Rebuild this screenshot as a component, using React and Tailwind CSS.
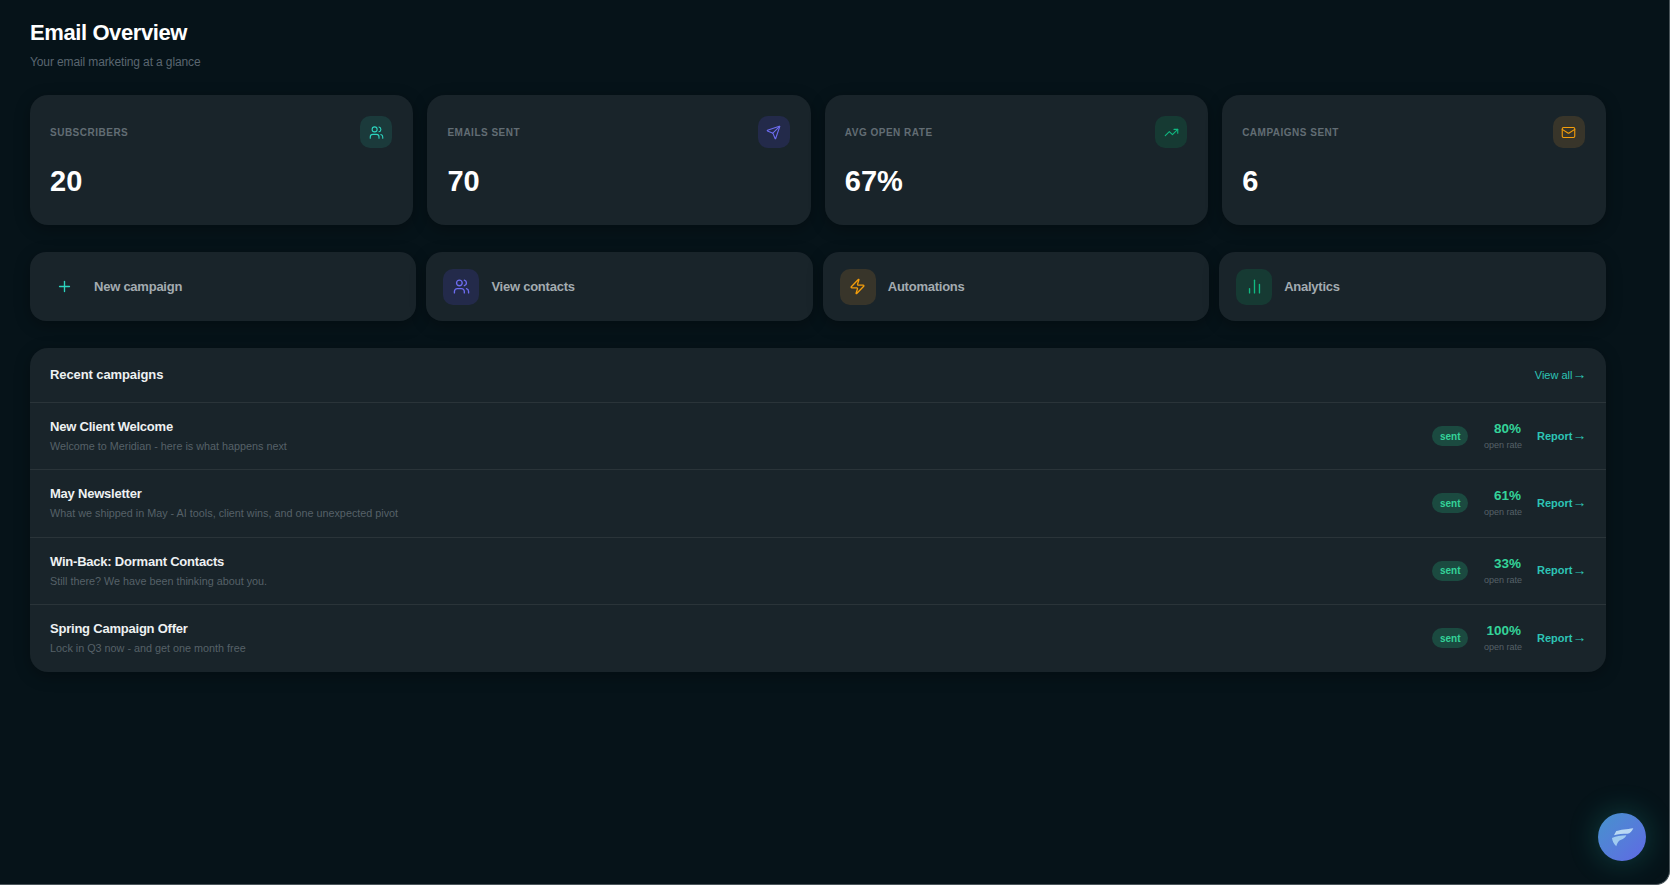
import React from 'react';
import { Users, Send, TrendingUp, Mail, Plus, Zap, ChartNoAxesColumn } from 'lucide-react';

const stats = [
  { label: 'SUBSCRIBERS', value: '20', Icon: Users, box: 'bg-[#1b3a3b]', color: 'text-[#2dd4bf]' },
  { label: 'EMAILS SENT', value: '70', Icon: Send, box: 'bg-[#232a4a]', color: 'text-[#6d6cf0]' },
  { label: 'AVG OPEN RATE', value: '67%', Icon: TrendingUp, box: 'bg-[#163a33]', color: 'text-[#10b981]' },
  { label: 'CAMPAIGNS SENT', value: '6', Icon: Mail, box: 'bg-[#38352a]', color: 'text-[#f59e0b]' },
];

const actions = [
  { label: 'New campaign', Icon: Plus, box: 'w-[35px]', color: 'text-[#2dd4bf]' },
  { label: 'View contacts', Icon: Users, box: 'w-9 bg-[#232a4a]', color: 'text-[#6d6cf0]' },
  { label: 'Automations', Icon: Zap, box: 'w-9 bg-[#38352a]', color: 'text-[#f59e0b]' },
  { label: 'Analytics', Icon: ChartNoAxesColumn, box: 'w-9 bg-[#163a33]', color: 'text-[#10b981]' },
];

const campaigns = [
  { name: 'New Client Welcome', sub: 'Welcome to Meridian - here is what happens next', rate: '80%' },
  { name: 'May Newsletter', sub: 'What we shipped in May - AI tools, client wins, and one unexpected pivot', rate: '61%' },
  { name: 'Win-Back: Dormant Contacts', sub: 'Still there? We have been thinking about you.', rate: '33%' },
  { name: 'Spring Campaign Offer', sub: 'Lock in Q3 now - and get one month free', rate: '100%' },
];

export default function App() {
  return (
    <div className="relative h-[885px] w-[1670px] overflow-hidden rounded-br-[14px] border-r border-b border-[#4a555a] bg-[#061319] font-['Liberation_Sans',sans-serif]">
      <div className="w-[1635.5px] pl-[30px] pr-[30px] pt-[19px]">
        {/* Header */}
        <h1 className="text-[22px] leading-[28px] font-semibold tracking-[-0.4px] text-white">Email Overview</h1>
        <p className="mt-[7px] text-[12px] leading-[16px] tracking-[-0.12px] text-[#5a6670]">Your email marketing at a glance</p>

        {/* Stat cards */}
        <div className="mt-[25px] grid grid-cols-4 gap-[14px]">
          {stats.map(({ label, value, Icon, box, color }) => (
            <div key={label} className="h-[130px] rounded-[18px] bg-[#19242a] pl-5 pr-[21px] pt-[21px] shadow-[0_4px_16px_rgba(0,0,0,0.3)]">
              <div className="flex items-center justify-between">
                <span className="text-[10px] font-semibold tracking-[0.05em] text-[#626d74]">{label}</span>
                <span className={`flex h-8 w-8 items-center justify-center rounded-[10px] ${box} ${color}`}>
                  <Icon size={15} strokeWidth={1.75} />
                </span>
              </div>
              <div className="mt-[16px] text-[29px] leading-[34px] font-bold text-white">{value}</div>
            </div>
          ))}
        </div>

        {/* Quick actions */}
        <div className="mt-[27px] grid grid-cols-4 gap-[10px]">
          {actions.map(({ label, Icon, box, color }) => (
            <div key={label} className="flex h-[69px] items-center gap-3 rounded-[16px] bg-[#19242a] px-[17px] shadow-[0_4px_16px_rgba(0,0,0,0.3)]">
              <span className={`flex h-9 items-center justify-center rounded-[10px] ${box} ${color}`}>
                <Icon size={17} strokeWidth={1.9} />
              </span>
              <span className="pt-[1px] text-[13px] font-semibold tracking-[-0.24px] text-[#a3abb0]">{label}</span>
            </div>
          ))}
        </div>

        {/* Recent campaigns */}
        <div className="mt-[27px] overflow-hidden rounded-[18px] bg-[#19242a] shadow-[0_4px_16px_rgba(0,0,0,0.3)]">
          <div className="flex h-[55px] items-center justify-between border-b border-[#2a3439] pl-5 pr-[19px]">
            <span className="text-[13px] font-semibold tracking-[-0.1px] text-[#eef1f2]">Recent campaigns</span>
            <span className="flex items-center text-[11px] text-[#2dc4b6]">View all<span className="-mt-[2px] text-[14px] leading-none">→</span></span>
          </div>
          {campaigns.map((c, i) => (
            <div key={c.name} className={`flex h-[67.25px] items-center justify-between pl-5 pr-[19px] ${i < 3 ? 'border-b border-[#2a3439]' : ''}`}>
              <div>
                <div className="text-[13px] leading-[17px] font-semibold tracking-[-0.22px] text-[#eef1f2]">{c.name}</div>
                <div className="mt-[4px] text-[10.8px] leading-[15px] text-[#566168]">{c.sub}</div>
              </div>
              <div className="flex items-center">
                <span className="flex h-5 items-center rounded-full bg-[#1b4a40] px-[7.5px] text-[10px] font-semibold text-[#34d399]">sent</span>
                <div className="ml-4 w-[37px] text-right">
                  <div className="text-[13.5px] leading-[16px] font-semibold whitespace-nowrap text-[#34d399]">{c.rate}</div>
                  <div className="mt-[2px] text-[9px] leading-[12px] whitespace-nowrap text-[#566168]">open rate</div>
                </div>
                <span className="ml-4 flex items-center text-[11px] font-semibold whitespace-nowrap text-[#2dc4b6]">Report<span className="-mt-[2px] text-[14px] leading-none">→</span></span>
              </div>
            </div>
          ))}
        </div>
      </div>

      {/* Floating logo button */}
      <div className="absolute right-[23px] bottom-[23px] flex h-12 w-12 items-center justify-center rounded-full bg-gradient-to-br from-[#4592cc] to-[#5f68e4] shadow-[0_0_30px_rgba(45,212,191,0.25)]">
        <svg width="23" height="20" viewBox="60 65 70 60">
          <path d="M76 77 C88 72 108 71 128 68 C124 77 118 84 110 85 C96 85 82 85 69 90 Z" fill="#c4e2f6" opacity="0.9" />
          <path d="M63 98 C75 93 90 91 107 90 C103 98 97 102 89 104 C83 106 79 113 76 123 C69 116 64 108 63 98 Z" fill="#a8d4f3" opacity="0.9" />
        </svg>
      </div>
    </div>
  );
}
